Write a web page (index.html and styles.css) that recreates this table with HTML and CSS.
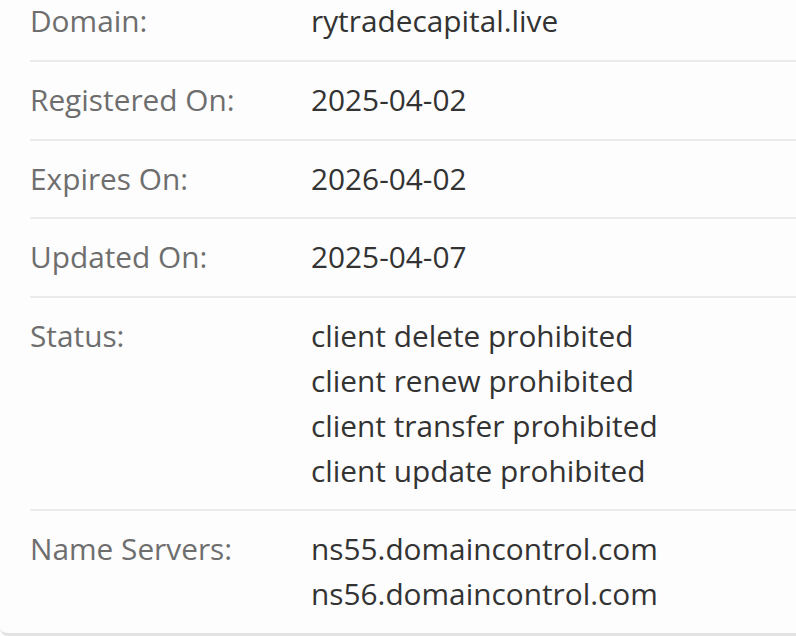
FILE: index.html
```html
<!DOCTYPE html>
<html>
<head>
<meta charset="utf-8">
<link rel="stylesheet" href="styles.css">
</head>
<body>
<div class="card">
  <div class="row">
    <div class="label">Domain:</div>
    <div class="value">rytradecapital.live</div>
  </div>
  <div class="row">
    <div class="label">Registered On:</div>
    <div class="value">2025-04-02</div>
  </div>
  <div class="row">
    <div class="label">Expires On:</div>
    <div class="value">2026-04-02</div>
  </div>
  <div class="row">
    <div class="label">Updated On:</div>
    <div class="value">2025-04-07</div>
  </div>
  <div class="row">
    <div class="label">Status:</div>
    <div class="value">client delete prohibited<br>client renew prohibited<br>client transfer prohibited<br>client update prohibited</div>
  </div>
  <div class="row">
    <div class="label">Name Servers:</div>
    <div class="value">ns55.domaincontrol.com<br>ns56.domaincontrol.com</div>
  </div>
</div>
</body>
</html>
```
FILE: styles.css
```css
html, body {
  margin: 0;
  padding: 0;
  background: #fdfdfd;
}
body {
  font-family: "Open Sans", sans-serif;
  font-size: 29.8px;
  line-height: 44.8px;
  overflow: hidden;
}
.card {
  margin-top: -17px;
  padding-left: 30px;
  border-bottom: 3px solid #e2e2e2;
  border-bottom-left-radius: 8px;
  background: #fdfdfd;
}
.row {
  display: flex;
  padding: 16px 0;
  border-top: 2px solid #ebebeb;
}
.row:first-child {
  border-top: none;
}
.label {
  width: 281px;
  flex: none;
  color: #6e6e6e;
}
.value {
  color: #333333;
}
```
